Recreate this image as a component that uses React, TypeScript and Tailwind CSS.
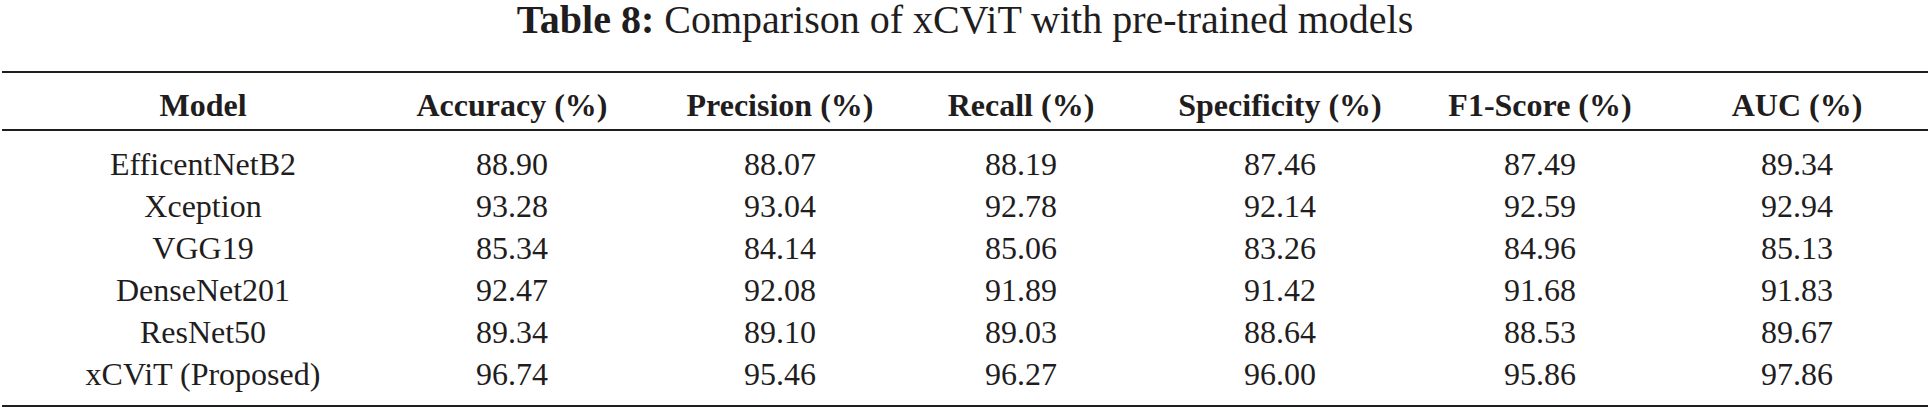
import React from 'react';

const headers = ['Model', 'Accuracy (%)', 'Precision (%)', 'Recall (%)', 'Specificity (%)', 'F1-Score (%)', 'AUC (%)'];

const rows: string[][] = [
  ['EfficentNetB2', '88.90', '88.07', '88.19', '87.46', '87.49', '89.34'],
  ['Xception', '93.28', '93.04', '92.78', '92.14', '92.59', '92.94'],
  ['VGG19', '85.34', '84.14', '85.06', '83.26', '84.96', '85.13'],
  ['DenseNet201', '92.47', '92.08', '91.89', '91.42', '91.68', '91.83'],
  ['ResNet50', '89.34', '89.10', '89.03', '88.64', '88.53', '89.67'],
  ['xCViT (Proposed)', '96.74', '95.46', '96.27', '96.00', '95.86', '97.86'],
];

// column tracks so each column sits centred on the printed table's column
const cols = 'grid grid-cols-[310px_308px_228px_254px_264px_256px_258px] pl-[46px]';

export default function App() {
  return (
    <div className="w-[1930px] h-[413px] bg-white text-[#1f1d1e] font-['Liberation_Serif',serif]">
      <h1 className="text-center text-[40px] leading-[40px] font-normal">
        <span className="font-bold">Table 8:</span> Comparison of xCViT with pre-trained models
      </h1>
      <div className="mt-[31px] mx-[2px] border-t-2 border-b-2 border-[#1f1d1e]">
        <div className={`${cols} h-[58px] pt-[6px] border-b-2 border-[#1f1d1e]`}>
          {headers.map((h) => (
            <div key={h} className="flex justify-center text-[32px] leading-[52px] font-bold whitespace-nowrap">
              {h}
            </div>
          ))}
        </div>
        <div className="pt-[12px] pb-[10px]">
          {rows.map((r, i) => (
            <div key={i} className={cols}>
              {r.map((c, j) => (
                <div key={j} className="flex justify-center text-[32px] leading-[42px] whitespace-nowrap">
                  {c}
                </div>
              ))}
            </div>
          ))}
        </div>
      </div>
    </div>
  );
}
